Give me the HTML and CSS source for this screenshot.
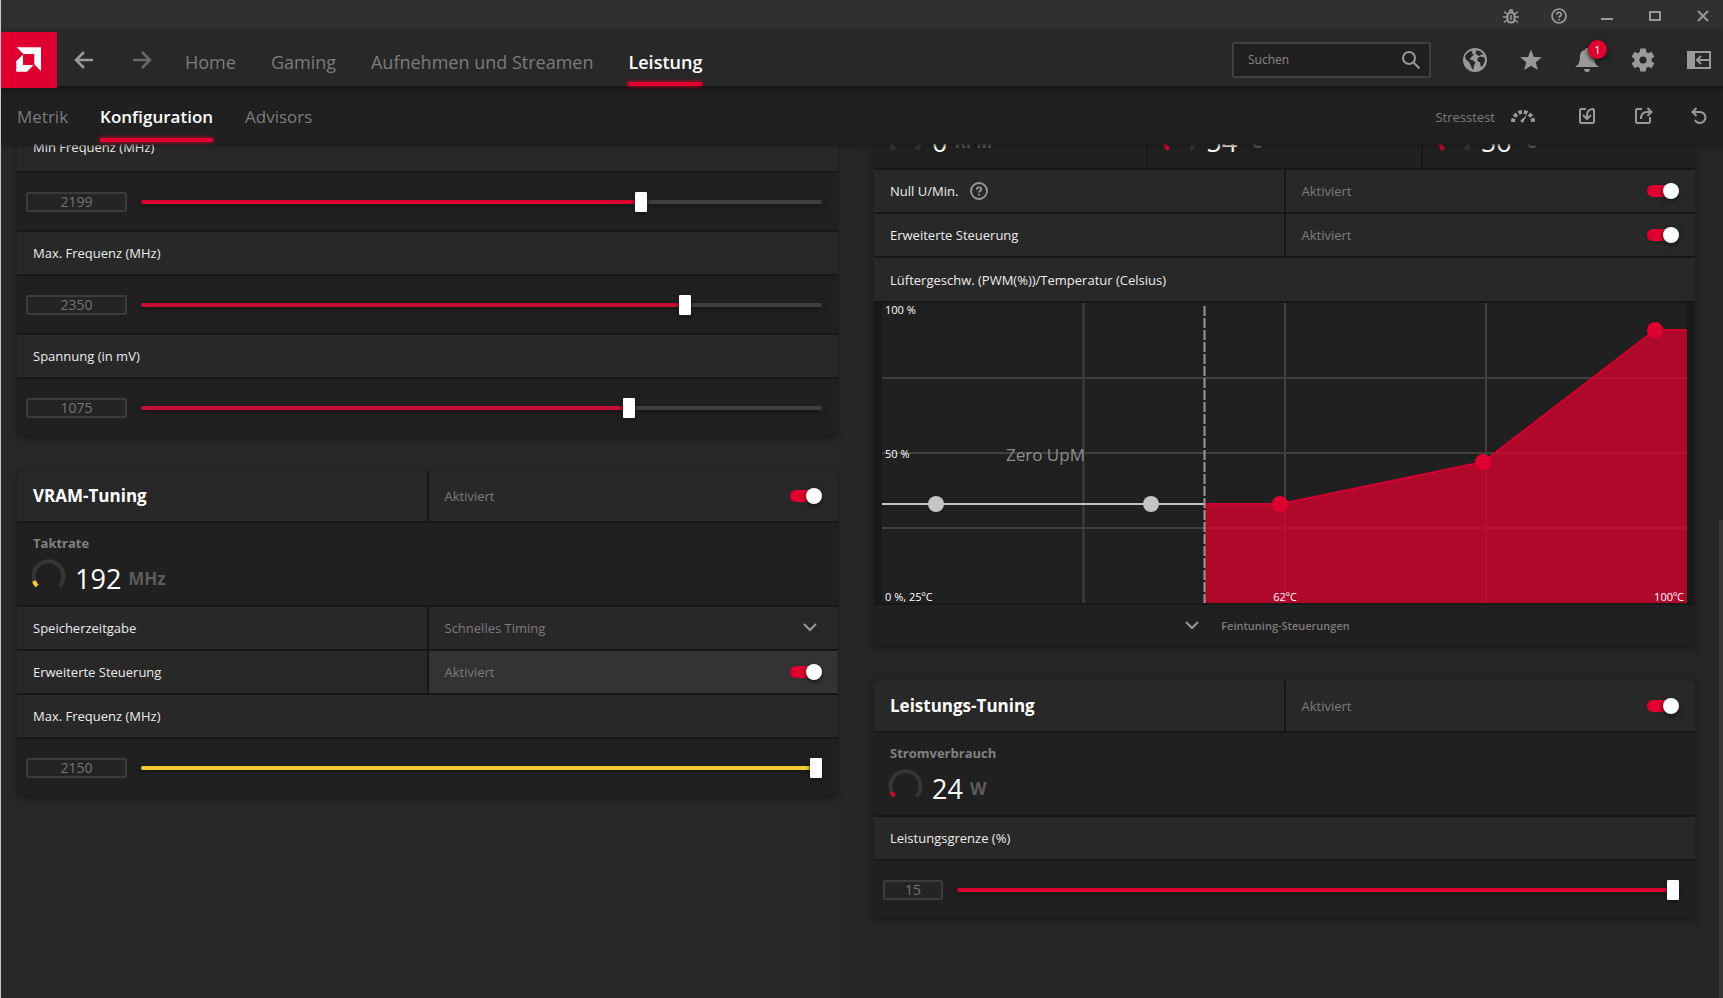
FILE: index.html
```
<!DOCTYPE html>
<html lang="de">
<head>
<meta charset="utf-8">
<title>Leistung – Konfiguration</title>
<link rel="stylesheet" href="styles.css">
</head>
<body>
<div class="app">
  <div class="titlebar">
    <button class="icon-btn" aria-label="Fehler melden"><svg width="16" height="16" viewBox="0 0 16 16" fill="none" stroke="currentColor" stroke-width="2"><path d="M8 4.500c-2.500 0-3.500 1.500-3.500 3.500v3c0 2 1.500 3.500 3.500 3.500s3.500-1.500 3.500-3.500V8c0-2-1-3.500-3.500-3.500z"/><path d="M5.500 3.500C5.500 2 6.500 1 8 1s2.500 1 2.500 2.500z" fill="currentColor" stroke="none"/><path d="M1 3.500l3 2.500M15 3.500l-3 2.500M0 9h4M16 9h-4M1 14.500l3-2.500M15 14.500l-3-2.500M8 7v5" stroke-width="1.500"/></svg></button>
    <button class="icon-btn" aria-label="Hilfe"><svg width="16" height="16" viewBox="0 0 16 16" fill="none" stroke="currentColor" stroke-width="1.700"><circle cx="8" cy="8" r="7"/><path d="M5.800 6.500c0-1.300 1-2.100 2.200-2.100s2.200.8 2.200 2c0 1.500-2.200 1.700-2.200 3.300M8 10.900v1.700"/></svg></button>
    <button class="icon-btn" aria-label="Minimieren"><svg width="16" height="16" viewBox="0 0 16 16" stroke="currentColor" stroke-width="2"><path d="M2 11h12"/></svg></button>
    <button class="icon-btn" aria-label="Maximieren"><svg width="16" height="16" viewBox="0 0 16 16" fill="none" stroke="currentColor" stroke-width="2"><path d="M3 4h10v8H3z"/></svg></button>
    <button class="icon-btn" aria-label="Schließen"><svg width="16" height="16" viewBox="0 0 16 16" stroke="currentColor" stroke-width="2"><path d="M3 3l10 10M13 3L3 13"/></svg></button>
  </div>

  <header class="navbar">
    <a class="logo" href="#" aria-label="Startseite"><svg width="56" height="56" viewBox="0 0 56 56" fill="#fff"><path d="M15.700 15.300H40v24L33.300 32.300V22H22.300zM15.300 29l6.700-6.400V33h10.700L26 39.700H15.300z"/></svg></a>
    <div class="history">
      <button class="icon-btn" aria-label="Zurück"><svg width="24" height="24" viewBox="0 0 24 24" fill="none" stroke="currentColor" stroke-width="2.500"><path d="M21 12H5M12 4l-8 8 8 8"/></svg></button>
      <button class="icon-btn dim" aria-label="Vorwärts"><svg width="24" height="24" viewBox="0 0 24 24" fill="none" stroke="currentColor" stroke-width="2.500"><path d="M3 12h16M12 4l8 8-8 8"/></svg></button>
    </div>
    <nav class="tabs main-tabs">
      <a href="#">Home</a>
      <a href="#">Gaming</a>
      <a href="#">Aufnehmen und Streamen</a>
      <a href="#" class="active">Leistung</a>
    </nav>
    <div class="search">
      <input type="text" placeholder="Suchen" aria-label="Suchen">
      <svg width="18" height="18" viewBox="0 0 18 18" fill="none" stroke="currentColor" stroke-width="2"><circle cx="7" cy="7" r="6"/><path d="M11.500 11.500l6 6"/></svg>
    </div>
    <div class="nav-icons">
      <button class="icon-btn" aria-label="Web"><svg width="24" height="24" viewBox="0 0 24 24"><circle cx="12" cy="12" r="12" fill="currentColor"/><path fill="#282828" d="M2 8.500C3 6 5 4 7.500 3l2 .5-.5 2 2 1-3 3-1.500 2 3 .5 3 2.500-1.500 3-.5 3.500-1 .5-2-4.500-1.500-3L3 11.500zM13 2.500l4 .5 4 4-3-.5-1.500 1.500L14 7l-1.500-1.500zM14.500 10l3-1.500 4 1 .5 3-2 5-2 1.500-1-4.500-2.500-1.500z"/></svg></button>
      <button class="icon-btn" aria-label="Favoriten"><svg width="24" height="24" viewBox="0 0 24 24" fill="currentColor"><path d="M12 1.500l2.900 7.400 8.100.4-6.300 5 2.200 7.800L12 17.700 5.100 22.100l2.200-7.800L1 9.300l8.100-.4z"/></svg></button>
      <button class="icon-btn bell" aria-label="Benachrichtigungen"><svg width="24" height="24" viewBox="0 0 24 24" fill="currentColor"><path d="M12 0c-1.200 0-2 .8-2 1.800C6.500 2.700 4.800 5.500 4.800 9c0 5-1 8-4.300 9.500V19h23v-.500C20.200 17 19.200 14 19.200 9c0-3.500-1.700-6.300-5.200-7.200C14 .8 13.200 0 12 0zM9 21h6c0 1.800-1.300 3-3 3s-3-1.200-3-3z"/></svg><span class="badge">1</span></button>
      <button class="icon-btn" aria-label="Einstellungen"><svg width="24" height="24" viewBox="2 2 20 20" fill="currentColor"><path fill-rule="evenodd" d="M19.140 12.940c.04-.3.060-.610.060-.940 0-.320-.020-.640-.070-.940l2.030-1.580c.180-.140.230-.410.120-.610l-1.920-3.320c-.120-.220-.370-.290-.590-.220l-2.390.960c-.500-.380-1.030-.700-1.620-.940l-.360-2.540c-.040-.240-.240-.410-.480-.410h-3.840c-.240 0-.430.170-.470.410l-.360 2.540c-.590.240-1.130.570-1.620.940l-2.390-.960c-.220-.080-.470 0-.590.220L2.740 8.870c-.120.210-.080.470.120.610l2.030 1.580c-.050.300-.090.630-.090.940s.020.640.070.940l-2.030 1.580c-.180.140-.230.410-.120.610l1.920 3.320c.120.220.370.290.590.220l2.390-.960c.500.380 1.030.700 1.620.940l.360 2.540c.050.240.240.410.480.410h3.840c.240 0 .440-.170.470-.410l.360-2.540c.590-.240 1.130-.560 1.620-.940l2.390.960c.220.080.470 0 .590-.220l1.920-3.320c.120-.220.070-.470-.120-.610zM12 15a3 3 0 1 1 0-6 3 3 0 0 1 0 6z"/></svg></button>
      <button class="icon-btn" aria-label="Seitenleiste"><svg width="24" height="24" viewBox="0 0 24 24" fill="none" stroke="currentColor" stroke-width="2"><path d="M1 4h22v16H1z"/><path d="M0 3h8v18H0z" fill="currentColor" stroke="none"/><path d="M23 12H10M14 8l-4 4 4 4"/></svg></button>
    </div>
  </header>

  <div class="subnav">
    <nav class="tabs sub-tabs">
      <a href="#">Metrik</a>
      <a href="#" class="active">Konfiguration</a>
      <a href="#">Advisors</a>
    </nav>
    <div class="sub-actions">
      <button class="icon-btn stress"><span>Stresstest</span><svg width="24" height="24" viewBox="0 0 24 24" fill="none" stroke="currentColor"><path d="M2 18a10 10 0 1 1 20 0" stroke-width="4" stroke-dasharray="3.600 1.900"/><path d="M10 16l6-5.500-3.500 7.500a1.600 1.600 0 0 1-2.500-2z" fill="currentColor" stroke="none"/></svg></button>
      <button class="icon-btn" aria-label="Importieren"><svg width="24" height="24" viewBox="0 0 24 24" fill="none" stroke="currentColor" stroke-width="2"><path d="M11 5H6.500C5.500 5 5 5.500 5 6.500v11c0 1 .5 1.500 1.500 1.500h11c1 0 1.500-.5 1.500-1.500v-11c0-.8-.4-1.500-1.500-1.500M19 5c-4 0-7 2-7 6v4M8 11l4 4 4-4"/></svg></button>
      <button class="icon-btn" aria-label="Exportieren"><svg width="24" height="24" viewBox="0 0 24 24" fill="none" stroke="currentColor" stroke-width="2"><path d="M11 5H6.500C5.500 5 5 5.500 5 6.500v11c0 1 .5 1.500 1.500 1.500h11c1 0 1.500-.5 1.500-1.500V13M10 15c0-4 2-7 6-7h4M16.500 4l4 4-4 4"/></svg></button>
      <button class="icon-btn" aria-label="Zurücksetzen"><svg width="24" height="24" viewBox="0 0 24 24" fill="none" stroke="currentColor" stroke-width="2"><path d="M6 8h7.500a5.500 5.500 0 1 1-5.500 8M9.500 4L5.500 8l4 4"/></svg></button>
    </div>
  </div>

  <main class="viewport">
    <div class="columns">
      <div class="column column-left">
        <section class="panel flat-top">
          <div class="cell"><label for="minf">Min Frequenz (MHz)</label></div>
          <div class="slider-row"><input class="num" type="text" value="2199" aria-label="Min Frequenz Wert"><input id="minf" class="range" type="range" min="500" max="2800" value="2199" style="--fill:74%"></div>
          <div class="cell"><label for="maxf">Max. Frequenz (MHz)</label></div>
          <div class="slider-row"><input class="num" type="text" value="2350" aria-label="Max. Frequenz Wert"><input id="maxf" class="range muted" type="range" min="500" max="2800" value="2350" style="--fill:80%"></div>
          <div class="cell"><label for="volt">Spannung (in mV)</label></div>
          <div class="slider-row"><input class="num" type="text" value="1075" aria-label="Spannung Wert"><input id="volt" class="range muted" type="range" min="700" max="1220" value="1075" style="--fill:72%"></div>
        </section>

        <section class="panel">
          <div class="pair head">
            <h2 class="cell">VRAM-Tuning</h2>
            <label class="cell state">Aktiviert<input class="toggle" type="checkbox" checked></label>
          </div>
          <div class="metric">
            <h3>Taktrate</h3>
            <div class="reading"><svg class="gauge" width="30" height="34" viewBox="2 0 30 34"><path class="dial" d="M6.500 27.500A15 15 0 1 1 28.500 27.500"/><path class="mark yellow" d="M6 27A15 15 0 0 1 3 22"/></svg><span class="value">192</span><span class="unit">MHz</span></div>
          </div>
          <div class="pair">
            <div class="cell"><label for="timing">Speicherzeitgabe</label></div>
            <div class="cell drop"><select id="timing"><option>Schnelles Timing</option></select><svg width="14" height="10" viewBox="0 0 14 10"><path class="chevron" d="M1 1l6 6 6-6"/></svg></div>
          </div>
          <div class="pair">
            <div class="cell">Erweiterte Steuerung</div>
            <label class="cell state hover">Aktiviert<input class="toggle" type="checkbox" checked></label>
          </div>
          <div class="cell"><label for="vmax">Max. Frequenz (MHz)</label></div>
          <div class="slider-row"><input class="num" type="text" value="2150" aria-label="VRAM Frequenz Wert"><input id="vmax" class="range yellow" type="range" min="1000" max="2150" value="2150" style="--fill:99%"></div>
        </section>
      </div>

      <div class="column">
        <section class="panel flat-top">
          <div class="triple">
            <div class="metric"><div class="reading"><svg class="gauge" width="30" height="34" viewBox="2 0 30 34"><path class="dial" d="M6.500 27.500A15 15 0 1 1 28.500 27.500"/></svg><span class="value">0</span><span class="unit">RPM</span></div></div>
            <div class="metric"><div class="reading"><svg class="gauge" width="30" height="34" viewBox="2 0 30 34"><path class="dial" d="M6.500 27.500A15 15 0 1 1 28.500 27.500"/><path class="mark" d="M6.500 27.500A15 15 0 0 1 10 4"/></svg><span class="value">54</span><span class="unit">°C</span></div></div>
            <div class="metric"><div class="reading"><svg class="gauge" width="30" height="34" viewBox="2 0 30 34"><path class="dial" d="M6.500 27.500A15 15 0 1 1 28.500 27.500"/><path class="mark" d="M6.500 27.500A15 15 0 0 1 10 4"/></svg><span class="value">56</span><span class="unit">°C</span></div></div>
          </div>
          <div class="pair">
            <div class="cell">Null U/Min.<button class="icon-btn hint" aria-label="Info"><svg width="18" height="18" viewBox="0 0 18 18" fill="none" stroke="currentColor" stroke-width="1.800"><circle cx="9" cy="9" r="8"/><path d="M6.800 7.500c0-1.300 1-2.100 2.200-2.100s2.200.8 2.200 2c0 1.500-2.200 1.500-2.200 3M9 11.700v1.700"/></svg></button></div>
            <label class="cell state">Aktiviert<input class="toggle" type="checkbox" checked></label>
          </div>
          <div class="pair">
            <div class="cell">Erweiterte Steuerung</div>
            <label class="cell state">Aktiviert<input class="toggle" type="checkbox" checked></label>
          </div>
          <div class="cell tall">Lüftergeschw. (PWM(%))/Temperatur (Celsius)</div>
          <div class="chart">
            <svg viewBox="0 0 805 300" role="img" aria-label="Lüfterkurve">
              <rect width="805" height="300" fill="#202020"/>
              <path class="grid" d="M201.500 0v300M403 0v300M604 0v300M0 75h805M0 150h805M0 225h805"/>
              <path class="area" d="M323 201H398L601 159 773 27H805V300H323z"/>
              <path class="curve" d="M323 201H398L601 159 773 27H805"/>
              <path class="idle" d="M0 201H322"/>
              <path class="limit" d="M322.500 3V300"/>
              <g fill="#c4c4c4"><circle cx="54" cy="201" r="8"/><circle cx="269" cy="201" r="8"/></g>
              <g fill="#e0002f"><circle cx="398" cy="201" r="8"/><circle cx="601" cy="159" r="8"/><circle cx="773" cy="27" r="8"/></g>
              <text class="tick" x="3" y="11">100 %</text>
              <text class="tick" x="3" y="155">50 %</text>
              <text class="tick" x="3" y="298">0 %, 25ºC</text>
              <text class="tick" x="403" y="298" text-anchor="middle">62ºC</text>
              <text class="tick" x="802" y="298" text-anchor="end">100ºC</text>
              <text class="zero" x="124" y="158">Zero UpM</text>
            </svg>
          </div>
          <button class="expander"><svg width="14" height="10" viewBox="0 0 14 10"><path class="chevron" d="M1 1l6 6 6-6"/></svg><span>Feintuning-Steuerungen</span></button>
        </section>

        <section class="panel">
          <div class="pair head">
            <h2 class="cell">Leistungs-Tuning</h2>
            <label class="cell state">Aktiviert<input class="toggle" type="checkbox" checked></label>
          </div>
          <div class="metric">
            <h3>Stromverbrauch</h3>
            <div class="reading"><svg class="gauge" width="30" height="34" viewBox="2 0 30 34"><path class="dial" d="M6.500 27.500A15 15 0 1 1 28.500 27.500"/><path class="mark" d="M6 27A15 15 0 0 1 3.500 23"/></svg><span class="value">24</span><span class="unit">W</span></div>
          </div>
          <div class="cell"><label for="plimit">Leistungsgrenze (%)</label></div>
          <div class="slider-row"><input class="num short" type="text" value="15" aria-label="Leistungsgrenze Wert"><input id="plimit" class="range" type="range" min="-6" max="15" value="15" style="--fill:99%"></div>
        </section>
      </div>
    </div>
    <div class="scroll-thumb"></div>
  </main>
</div>
</body>
</html>
```
FILE: styles.css
```
* { box-sizing: border-box; }

body {
  margin: 0;
  background: #282828;
  color: #ececec;
  font: 13px/20px "Open Sans", "Noto Sans", sans-serif;
}

button, input, select { font: inherit; color: inherit; }

.app {
  display: flex;
  flex-direction: column;
  height: 100vh;
  overflow: hidden;
  border-left: 1px solid #c8c8c8;
}

.icon-btn {
  display: flex;
  align-items: center;
  padding: 0;
  border: 0;
  background: none;
  color: #999;
}
.icon-btn.dim { color: #6a6a6a; }

.titlebar {
  display: flex;
  flex: none;
  justify-content: flex-end;
  gap: 32px;
  height: 32px;
  padding-right: 12px;
  background: #303030;
}

.navbar {
  position: relative;
  z-index: 3;
  display: flex;
  flex: none;
  height: 54px;
  background: #282828;
  box-shadow: 0 2px 6px #0e0e0e;
}
.logo { flex: none; width: 56px; height: 56px; background: #e0002f; }
.history { display: flex; gap: 34px; padding: 2px 31px 0 15px; }

.tabs { display: flex; color: #7c7c7c; }
.tabs a {
  display: flex;
  align-items: center;
  padding-top: 10px;
  color: inherit;
  text-decoration: none;
  white-space: nowrap;
  border-bottom: 4px solid transparent;
}
.tabs .active {
  position: relative;
  color: #fff;
  font-weight: 600;
}
.tabs .active::after {
  content: "";
  position: absolute;
  left: 0;
  right: 0;
  bottom: -4px;
  height: 4px;
  background: #e0002f;
  box-shadow: 0 0 4px #e0002f;
}
.main-tabs { gap: 35px; font-size: 18px; }
.sub-tabs { gap: 32px; font-size: 17px; }

.search {
  display: flex;
  align-items: center;
  width: 199px;
  height: 36px;
  margin: 10px 32px 0 auto;
  padding-right: 9px;
  border: 2px solid #404040;
  border-radius: 2px;
  background: #202020;
  color: #999;
}
.search input {
  flex: 1;
  min-width: 0;
  padding: 0 0 0 14px;
  border: 0;
  background: none;
  font-size: 12px;
}
.search input::placeholder { color: #858585; }

.nav-icons { display: flex; gap: 32px; padding: 2px 12px 0 0; }
.bell { position: relative; }
.badge {
  position: absolute;
  top: 6px;
  left: 13px;
  width: 19px;
  height: 19px;
  border-radius: 50%;
  background: #e0002f;
  box-shadow: 0 2px 4px #141414;
  color: #fff;
  font-size: 11px;
  line-height: 19px;
  text-align: center;
}

.subnav {
  position: relative;
  z-index: 2;
  display: flex;
  flex: none;
  justify-content: space-between;
  height: 58px;
  padding: 0 12px 2px 16px;
  background: #202020;
  box-shadow: 0 1px 4px #181818;
}
.sub-actions { display: flex; gap: 32px; padding-top: 3px; }
.stress { gap: 16px; margin-right: 8px; }
.stress span { padding-top: 3px; color: #7c7c7c; font-size: 13px; }

.viewport {
  position: relative;
  flex: 1;
  min-height: 0;
  overflow: hidden;
  background: linear-gradient(90deg, #282828 48%, #242527 50%, #242527);
}
.scroll-thumb {
  position: absolute;
  right: 0;
  top: 44%;
  bottom: 0;
  width: 4px;
  background: #363636;
}

/* The list is scrolled: its first rows sit partly behind the sub navigation. */
.columns {
  display: grid;
  grid-template-columns: minmax(0, 1fr) minmax(0, 1fr);
  gap: 36px;
  margin-top: -58px;
  padding: 0 28px 0 16px;
}
.column { display: flex; flex-direction: column; gap: 35px; }
.column-left { padding-top: 37px; }

.panel {
  display: flex;
  flex-direction: column;
  gap: 2px;
  overflow: hidden;
  border-radius: 5px;
  background: #171717;
  box-shadow: 0 2px 5px #191919;
}
.flat-top { border-radius: 0 0 5px 5px; }

.cell {
  display: flex;
  align-items: center;
  min-height: 42px;
  padding: 0 16px;
  background: #282828;
}
.flat-top > .cell:first-child { min-height: 48px; }
.pair { display: grid; grid-template-columns: 1fr 1fr; gap: 2px; }
.head .cell { min-height: 50px; }
.cell.tall { min-height: 43px; }
.triple { display: grid; grid-template-columns: 1fr 1fr 1fr; gap: 2px; }

h2, h3 { margin: 0; font-weight: 700; }
h2 { color: #fff; font-size: 17px; }
h3 { color: #808080; font-size: 13px; line-height: 20px; }

.state { justify-content: space-between; color: #7c7c7c; }
.hover { background: #333; }
.hint { margin-left: 12px; }

.toggle {
  appearance: none;
  display: flex;
  justify-content: flex-end;
  align-items: center;
  width: 32px;
  height: 12px;
  margin: 0;
  border-radius: 6px;
  background: #e0002f;
}
.toggle::before {
  content: "";
  width: 16px;
  height: 16px;
  border-radius: 50%;
  background: #fff;
  box-shadow: 0 2px 4px #141414;
}

.drop { position: relative; padding: 0; color: #7c7c7c; }
.drop select {
  appearance: none;
  width: 100%;
  height: 42px;
  padding: 0 16px;
  border: 0;
  background: none;
}
.drop svg { position: absolute; right: 21px; pointer-events: none; }
.chevron { fill: none; stroke: #999; stroke-width: 2; }

.metric {
  display: flex;
  flex-direction: column;
  justify-content: flex-end;
  height: 82px;
  padding: 0 16px 6px;
  background: #202020;
}
.reading { display: flex; align-items: center; height: 46px; }
.gauge { flex: none; margin-right: 12px; overflow: visible; }
.dial, .mark { fill: none; stroke-width: 4; }
.dial { stroke: #363636; }
.mark { stroke: #d80030; }
.mark.yellow { stroke: #ffc933; }
.value, .unit { padding-top: 6px; line-height: 40px; }
.value { color: #fff; font-size: 27px; }
.unit { margin-left: 7px; color: #5c5c5c; font-size: 17px; font-weight: 700; }

.slider-row {
  display: flex;
  align-items: center;
  gap: 14px;
  height: 57px;
  padding: 0 16px 0 9px;
  background: #202020;
}
.num {
  width: 101px;
  height: 20px;
  padding: 0;
  border: 2px solid #3c3c3c;
  border-radius: 2px;
  background: #242424;
  color: #747474;
  font-size: 14px;
  line-height: 16px;
  text-align: center;
}
.num.short { width: 60px; }

.range {
  --tone: #e0002f;
  appearance: none;
  flex: 1;
  min-width: 0;
  height: 20px;
  margin: 0;
  background: none;
}
.range.muted { --tone: #c60d35; }
.range.yellow { --tone: #ffc933; }
.range::-webkit-slider-runnable-track {
  height: 4px;
  border-radius: 2px;
  background: linear-gradient(90deg, var(--tone) var(--fill), #404040 var(--fill));
  box-shadow: 0 2px 4px #161616;
}
.range::-webkit-slider-thumb {
  appearance: none;
  width: 12px;
  height: 20px;
  margin-top: -8px;
  border-radius: 1px;
  background: #fff;
  box-shadow: 0 2px 4px #141414;
}

.chart { padding: 0 8px; background: #191919; }
.chart svg { display: block; width: 100%; }
.grid { fill: none; stroke: #404040; stroke-width: 2; }
.area { fill: #e0002f; fill-opacity: 0.75; }
.curve { fill: none; stroke: #d00030; stroke-width: 2; }
.idle { stroke: #c4c4c4; stroke-width: 2; }
.limit { stroke: #999; stroke-width: 2; stroke-dasharray: 10 2; }
.tick { fill: #fff; font-size: 11px; }
.zero { fill: #8c8c8c; font-size: 17px; }

.expander {
  display: flex;
  justify-content: center;
  align-items: center;
  gap: 22px;
  height: 41px;
  padding: 0 34px 0 0;
  border: 0;
  background: #202020;
  color: #7c7c7c;
  font-size: 11px;
  font-weight: 600;
}
```
